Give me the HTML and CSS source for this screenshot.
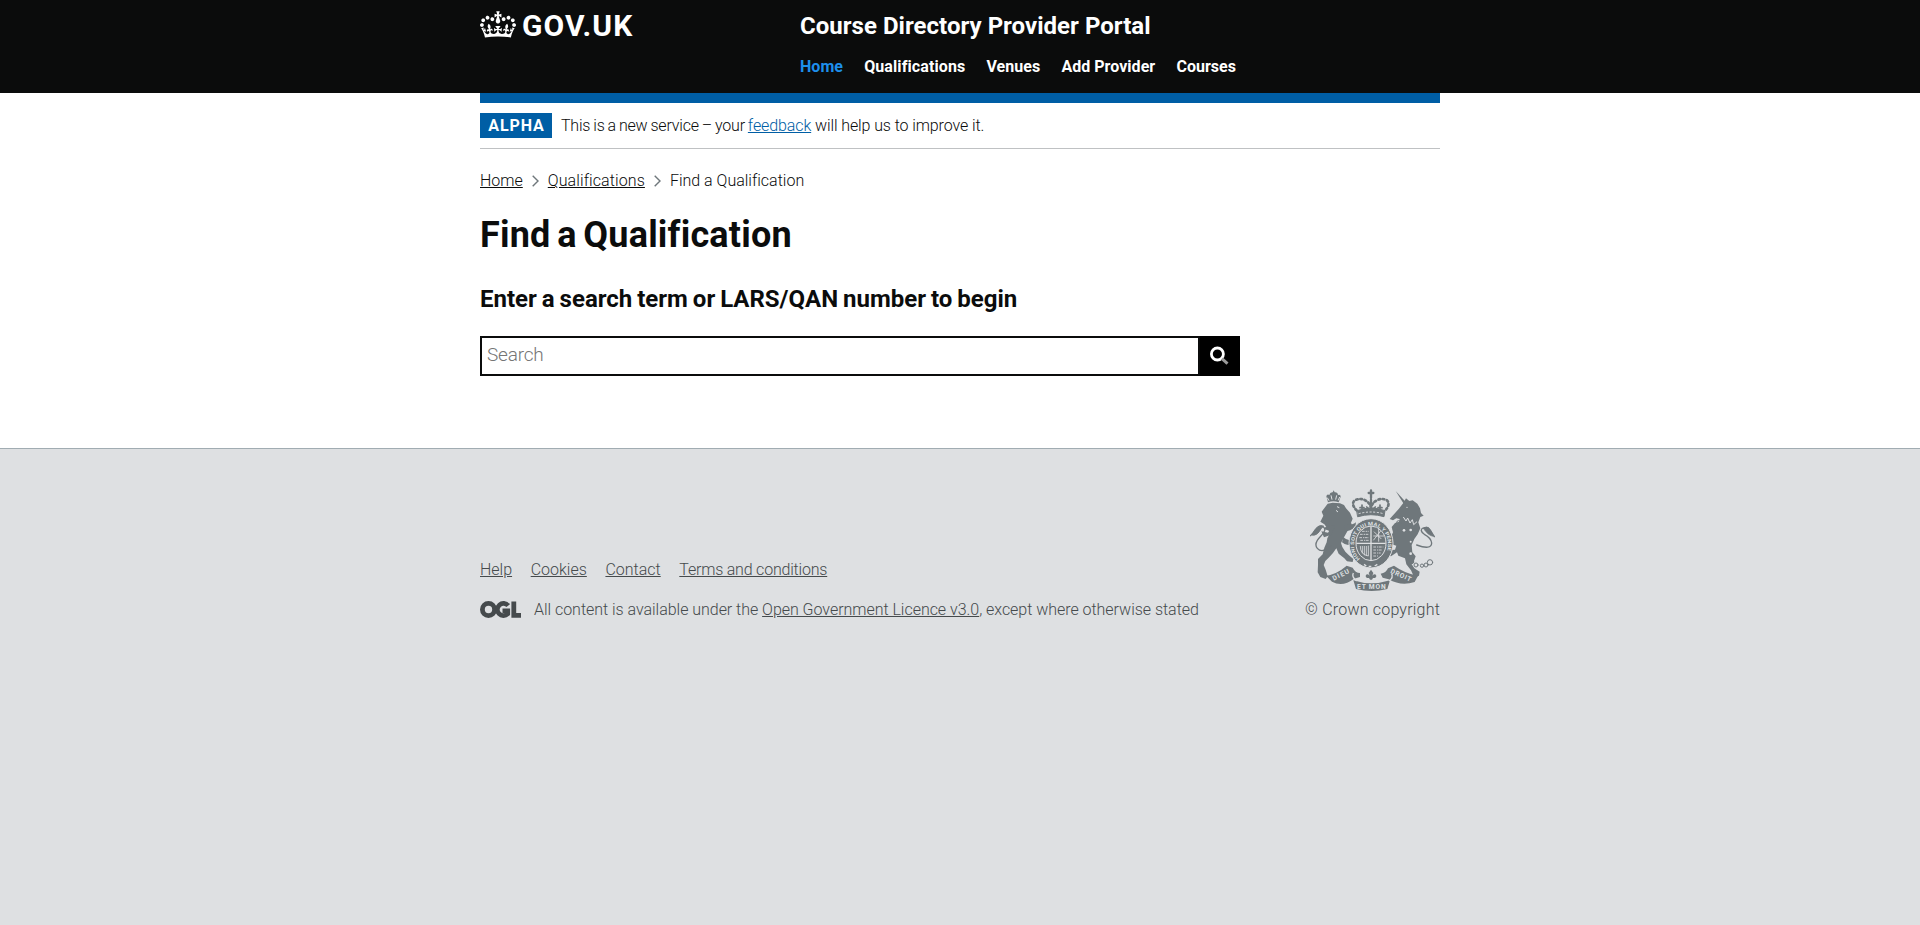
FILE: index.html
```html
<!DOCTYPE html>
<html lang="en">
<head>
<meta charset="utf-8">
<title>Find a Qualification</title>
<link rel="stylesheet" href="styles.css">
</head>
<body>
<header class="header">
  <div class="container header-inner">
    <a class="logo" href="#">
      <svg class="crown" viewBox="0 0 132 97" fill="currentColor"><path fill-rule="evenodd" d="M25 30.2c3.5 1.5 7.7-.2 9.1-3.7 1.5-3.6-.2-7.8-3.9-9.2-3.6-1.4-7.6.3-9.1 3.9-1.4 3.5.3 7.5 3.9 9zM9 39.5c3.6 1.5 7.8-.2 9.2-3.7 1.5-3.6-.2-7.8-3.9-9.1-3.6-1.5-7.6.2-9.1 3.8-1.4 3.5.3 7.5 3.8 9zM4.4 57.2c3.5 1.5 7.7-.2 9.1-3.8 1.5-3.6-.2-7.7-3.9-9.1-3.5-1.5-7.6.3-9.1 3.8-1.4 3.5.3 7.6 3.9 9.1zm38.3-21.4c3.5 1.5 7.7-.2 9.1-3.8 1.5-3.6-.2-7.7-3.9-9.1-3.6-1.5-7.6.3-9.1 3.8-1.3 3.6.4 7.7 3.9 9.1zm64.4-5.6c-3.6 1.5-7.8-.2-9.1-3.7-1.5-3.6.2-7.8 3.8-9.2 3.6-1.4 7.7.3 9.2 3.9 1.3 3.5-.4 7.5-3.9 9zm15.9 9.3c-3.6 1.5-7.7-.2-9.1-3.7-1.5-3.6.2-7.8 3.7-9.1 3.6-1.5 7.7.2 9.2 3.8 1.5 3.5-.3 7.5-3.8 9zm4.7 17.7c-3.6 1.5-7.8-.2-9.2-3.8-1.5-3.6.2-7.7 3.9-9.1 3.6-1.5 7.7.3 9.2 3.8 1.3 3.5-.4 7.6-3.9 9.1zM89.3 35.8c-3.6 1.5-7.8-.2-9.2-3.8-1.4-3.6.2-7.7 3.9-9.1 3.6-1.5 7.7.3 9.2 3.8 1.4 3.6-.3 7.7-3.9 9.1zM69.7 17.7l8.9 4.7V9.3l-8.9 2.8c-.2-.3-.5-.6-.9-.9L72.4 0H59.6l3.5 11.2c-.3.3-.6.5-.9.9l-8.8-2.8v13.1l8.8-4.7c.3.3.6.7.9.9l-5 15.4v.1c-.2.8-.4 1.6-.4 2.4 0 4.1 3.1 7.5 7 8.1h.2c.3 0 .7.1 1 .1.4 0 .7 0 1-.1h.2c4-.6 7.1-4.1 7.1-8.1 0-.8-.1-1.7-.4-2.4V34l-5.1-15.4c.4-.2.7-.6 1-.9zM66 92.8c16.9 0 32.8 1.1 47.1 3.2 4-16.9 8.9-26.7 14-33.5l-9.6-3.4c1 4.9 1.1 7.2 0 10.2-1.5-1.4-3-4.3-4.2-8.7L108.6 76c2.8-2 5-3.2 7.5-3.3-4.4 9.4-10 11.9-13.6 11.2-4.3-.8-6.3-4.6-5.6-7.9 1-4.7 5.7-5.9 8-.5 4.3-8.7-3-11.4-7.6-8.8 7.1-7.2 7.9-13.5 2.1-21.1-8 6.1-8.1 12.3-4.5 20.8-4.7-5.4-12.1-2.5-9.5 6.2 3.4-5.2 7.9-2 7.2 3.1-.6 4.3-6.4 7.8-13.5 7.2-10.3-.9-10.9-8-11.2-13.8 2.5-.5 7.1 1.8 11 7.3L80.2 60c-4.1 4.4-8 5.3-12.3 5.4 1.4-4.4 8-11.6 8-11.6H55.5s6.4 7.2 7.9 11.6c-4.2-.1-8-1-12.3-5.4l1.4 16.4c3.9-5.5 8.5-7.7 10.9-7.3-.3 5.8-.9 12.8-11.1 13.8-7.2.6-12.9-2.9-13.5-7.2-.7-5 3.8-8.3 7.1-3.1 2.7-8.7-4.6-11.6-9.4-6.2 3.7-8.5 3.6-14.7-4.6-20.8-5.8 7.6-5 13.9 2.2 21.1-4.7-2.6-11.9.1-7.7 8.8 2.3-5.5 7.1-4.2 8.1.5.7 3.3-1.3 7.1-5.7 7.9-3.5.7-9-1.8-13.5-11.2 2.5.1 4.7 1.3 7.5 3.3l-4.7-15.4c-1.2 4.4-2.7 7.2-4.3 8.7-1.1-3-.9-5.3 0-10.2l-9.5 3.4c5 6.9 9.9 16.7 14 33.5 14.8-2.1 30.8-3.2 47.7-3.2z"/></svg>
      <span>GOV.UK</span>
    </a>
    <div class="header-content">
      <a class="service-name" href="#">Course Directory Provider Portal</a>
      <nav class="nav">
        <a class="active" href="#">Home</a>
        <a href="#">Qualifications</a>
        <a href="#">Venues</a>
        <a href="#">Add Provider</a>
        <a href="#">Courses</a>
      </nav>
    </div>
  </div>
</header>

<div class="page">
  <main class="container main">
    <div class="phase-banner">
      <strong class="tag">ALPHA</strong>
      <span class="phase-text"><span class="phase-lead">This is a new service – your </span><a href="#">feedback</a> will help us to improve it.</span>
    </div>
    <nav class="breadcrumbs">
      <a href="#">Home</a>
      <svg class="chevron" viewBox="0 0 7 12"><path d="M.7.7 6 6 .7 11.3"/></svg>
      <a href="#">Qualifications</a>
      <svg class="chevron" viewBox="0 0 7 12"><path d="M.7.7 6 6 .7 11.3"/></svg>
      <span>Find a Qualification</span>
    </nav>
    <h1>Find a Qualification</h1>
    <h2>Enter a search term or LARS/QAN number to begin</h2>
    <form class="search">
      <input class="search-input" type="text" placeholder="Search">
      <button class="search-button" type="button" aria-label="Search">
        <svg viewBox="0 0 20 20"><circle cx="7.4" cy="8" r="6" fill="none" stroke="#fff" stroke-width="2.8"/><path d="m11.9 12.6 5.6 5" stroke="#999" stroke-width="3"/></svg>
      </button>
    </form>
  </main>
</div>

<footer class="footer">
  <div class="container footer-inner">
    <div class="footer-meta">
      <div class="footer-links">
        <a href="#">Help</a>
        <a href="#">Cookies</a>
        <a href="#">Contact</a>
        <a class="terms" href="#">Terms and conditions</a>
      </div>
      <div class="licence">
        <svg class="ogl" viewBox="0 0 41 17" fill="none" stroke="currentColor" stroke-width="4.8"><circle cx="8.5" cy="8.5" r="6.1"/><path d="M28.2 4.6A6.1 6.1 0 1 0 27.8 12.8V9.8H22.5" stroke-width="4.6"/><path d="M33.8.4V14.4H41"/></svg>
        <span>All content is available under the <a href="#">Open Government Licence v3.0</a>, except where otherwise stated</span>
      </div>
    </div>
    <div class="copyright">
      <svg class="crest" viewBox="60 42 375 306">
        <g fill="#6f777b">
          <!-- lion -->
          <path d="M114 82l-5-18q2-8 9-4 2-9 10-8l3-6 3 6q9-1 10 8 8-3 8 5l-6 17q-16-6-32 0z"/>
          <path d="M113 86l15-3 22 2 12 5 6 10 12 13 8 18-5 12 4 10-14 14-11 20-9 17 4 12 9 14 10 10 14 12-2 9-17-2-8-9-17-14-7-16-10 14-13 14-10 10-5 12 6 14 6 20-6 8-16-6-8-14 1-22 0-18 14-14 5-20 7-16 2-12 8-16-6-12-11-14-12-8 9-18-5-12z"/>
          <path d="M135 152l-26 2-8 8 17 5-4 6-20-4 8 18 22-8z"/>
          <path d="M164 150q22 2 34-8l-2 14q-14 12-34 14zM160 186q16 16 28 4l6 12q-20 16-38 0z"/>
          <!-- unicorn -->
          <path d="M317 48l31 34-6 6z"/>
          <path d="M326 102l14-18 8-14 10 8 10-2 14 10 8 14 3 14 8 8-10 4-6 16 6 18-8 18-10 14-8 18 2 22 10 12-6 16-6 8 8 12 16 10-2 12-14 6-10-22-14-18-4-18-20-8-4-10-18 12-22-6 14-12 20-2 4-12-24-8-14 4-14-18-6-22 16 6 10 12 14 4 8-18-4-16 10-12 12-4 2-8-10-2-10 6-10-4z"/>
          <!-- banner ribbons -->
          <path d="M108 302q32-4 62-30l18 6q8 16 22 16v12l-18 5q-34 26-66 9z"/>
          <path d="M384 302q-38-6-72-30l-18 8q-6 14-22 16l6 12 18 5q38 22 78 8z"/>
          <path d="M190 316q53 18 110 0l-8 26q-47 12-94 0z"/>
        </g>
        <g fill="none" stroke="#6f777b" stroke-linecap="round">
          <path d="M122 214Q96 236 82 220 70 206 92 184 112 164 100 156 88 150 62 182" stroke-width="4"/>
          <path d="M100 153Q82 144 66 180 82 184 94 160z" fill="#6f777b" stroke-width="3"/>
          <path d="M380 210q44 16 45-6-2-16-22-26-16-12-4-19 16-6 34 26" stroke-width="4"/>
          <path d="M400 160q18-16 30 24-16-2-30-24z" fill="#6f777b" stroke-width="2"/>
          <path d="M200 106Q182 88 194 76 210 68 226 76 240 84 243 98 246 84 260 76 276 68 291 76 302 88 286 106" stroke-width="8" stroke-dasharray="5 8"/>
          <path d="M243 46v22m-7-14h14M243 74v30" stroke-width="7"/>
          <path d="M216 90v16m-6-8h12M270 90v16m-6-8h12M230 96q13 14 26 0" stroke-width="5"/>
          <path d="m201 107q42-16 84 0l-3 18q-39-12-78 0z" fill="#6f777b" stroke-width="3"/>
          <circle cx="366" cy="261" r="5" stroke-width="3"/><circle cx="378" cy="270" r="6" stroke-width="3"/><circle cx="396" cy="272" r="5" stroke-width="3"/><circle cx="408" cy="270" r="6" stroke-width="3"/><circle cx="420" cy="262" r="8" stroke-width="3"/>
          <circle cx="326" cy="143" r="6" stroke-width="3"/><circle cx="316" cy="164" r="6" stroke-width="3"/>
        </g>
        <ellipse cx="243" cy="205" rx="66" ry="74" fill="#6f777b" stroke="#dee0e2" stroke-width="3"/>
        <ellipse cx="243" cy="205" rx="45" ry="52" fill="#6f777b" stroke="#dee0e2" stroke-width="3"/>
        <path id="garter" fill="none" d="M210 252A51 57 0 1 1 280 248"/>
        <text class="motto"><textPath href="#garter" textLength="236" lengthAdjust="spacingAndGlyphs">HONI SOIT QUI MAL Y PENSE</textPath></text>
        <g fill="none" stroke="#dee0e2" stroke-width="2.5">
          <path d="M243 154v102M199 205h88" stroke-width="4"/>
          <path d="M210 178h27M208 188h29M211 196h25M216 169h20" stroke-dasharray="8 3 4 2"/>
          <path d="M252 170l22 22m-2-24l-22 28M250 183h32M266 160v40"/>
          <path d="M211 213q-1 25 24 30v-31M217 213v22M223 213v28M229 213v30"/>
          <path d="M250 216h30M250 225h28M250 234h22M250 243h14" stroke-dasharray="8 3 4 2"/>
          <path d="M148 98l-7-3M138 106l6 5M112 68l5 9m6-16l3 13m14-13l-3 13m12-8l-4 10" stroke-width="3"/>
          <path d="m340 126 8 12 5-9 7 15 7-10 4 15 10-9" stroke-width="3"/>
          <path d="M206 116q37-10 74 0" stroke-width="3" stroke-dasharray="6 5"/>
          <path d="M222 268l7 5m7 1h8m10-1l8-5" stroke-width="4"/>
        </g>
        <g fill="#dee0e2"><circle cx="362" cy="165" r="4"/><circle cx="342" cy="166" r="4"/><circle cx="362" cy="236" r="4"/><circle cx="362" cy="200" r="3"/><circle cx="351" cy="97" r="2"/></g>
        <path d="M190 294q-6 12 10 24m97 0q14-10 8-22" fill="none" stroke="#dee0e2" stroke-width="4"/>
        <path fill="#6f777b" d="M243 284l7 10-3 8q8-8 12 0 0 8-10 7l-3 5h-6l-3-5q-10 1-10-7 4-8 12 0l-3-8z"/>
        <text class="scroll" transform="translate(131 317) rotate(-26)" textLength="54">DIEU</text>
        <text class="scroll" x="201" y="341" textLength="86">ET MON</text>
        <text class="scroll" transform="translate(300 293) rotate(24)" textLength="66">DROIT</text>
      </svg>
      <span>© Crown copyright</span>
    </div>
  </div>
</footer>
</body>
</html>
```
FILE: styles.css
```css
* { box-sizing: border-box; }

body {
  margin: 0;
  background: #dee0e2;
  color: #0b0c0c;
  font: 300 16px/20px Roboto, "Liberation Sans", sans-serif;
  font-variant-ligatures: none;
}

a { color: inherit; }

.container { width: 960px; margin: 0 auto; }

.header { height: 93px; background: #0b0c0c; color: #fff; }
.header a { text-decoration: none; }
.header-inner { display: grid; grid-template-columns: 320px 1fr; padding-top: 11px; }

.logo {
  display: flex;
  align-items: flex-start;
  gap: 6px;
  font-size: 30px;
  line-height: 30px;
  font-weight: 700;
  letter-spacing: 1.1px;
}
.crown { width: 36px; height: 27px; }

.service-name { display: block; font-size: 24px; line-height: 30px; font-weight: 700; letter-spacing: .03px; }

.nav { display: flex; gap: 21.2px; margin-top: 16px; font-weight: 700; letter-spacing: .03px; }
.nav .active { color: #1d8feb; }
.nav a:nth-child(2) { letter-spacing: .1px; }

.page { background: #fff; }
.main { height: 355px; border-top: 10px solid #005ea5; }

.phase-banner {
  display: flex;
  align-items: center;
  gap: 9px;
  height: 46px;
  border-bottom: 1px solid #bfc1c3;
}
.tag {
  width: 72px;
  height: 25px;
  padding-left: 1px;
  background: #005ea5;
  color: #fff;
  font-weight: 700;
  line-height: 25px;
  letter-spacing: .9px;
  text-align: center;
}
.phase-text { letter-spacing: -.1px; }
.phase-lead { letter-spacing: -.2px; word-spacing: -.7px; }
.phase-text a { color: #005ea5; }

.breadcrumbs { display: flex; align-items: center; margin-top: 22px; }
.breadcrumbs a:nth-of-type(2) { letter-spacing: .1px; }
.chevron { width: 7px; height: 12px; margin: 0 9px 0 9px; fill: none; stroke: #6f777b; stroke-width: 1.4; }

h1 { margin: 24px 0 0; font-size: 36px; line-height: 40px; font-weight: 700; letter-spacing: .2px; word-spacing: -2.5px; }
h2 { margin: 29px 0 0; font-size: 24px; line-height: 30px; font-weight: 700; letter-spacing: 0; word-spacing: -1px; }

.search { display: flex; width: 760px; height: 40px; margin-top: 22px; }
.search-input {
  flex: 1;
  min-width: 0;
  margin: 0;
  padding: 0 5px 2px;
  border: 2px solid #0b0c0c;
  border-radius: 0;
  background: #fff;
  font: 300 19px/24px Roboto, "Liberation Sans", sans-serif;
  letter-spacing: -.2px;
}
.search-input::placeholder { color: #757575; }
.search-button {
  display: flex;
  align-items: center;
  justify-content: center;
  width: 40px;
  padding: 0;
  border: 0;
  background: #000;
}
.search-button svg { width: 20px; height: 20px; }

.footer { border-top: 1px solid #a1acb2; color: #454a4c; }
.footer-inner { display: flex; justify-content: space-between; align-items: flex-end; padding-top: 40px; }
.footer-links { display: flex; gap: 18.6px; margin-bottom: 20px; }
.terms { letter-spacing: -.2px; }
.licence { display: flex; gap: 13px; align-items: center; letter-spacing: -.03px; }
.ogl { width: 41px; height: 17px; margin-bottom: 2px; }
.copyright { display: flex; flex-direction: column; align-items: flex-end; gap: 9px; letter-spacing: .2px; }
.crest { width: 125px; height: 102px; margin-right: 5px; }
.motto { fill: #dee0e2; font: 700 15px Roboto, sans-serif; }
.scroll { fill: #dee0e2; font: 700 20px Roboto, sans-serif; }
```
